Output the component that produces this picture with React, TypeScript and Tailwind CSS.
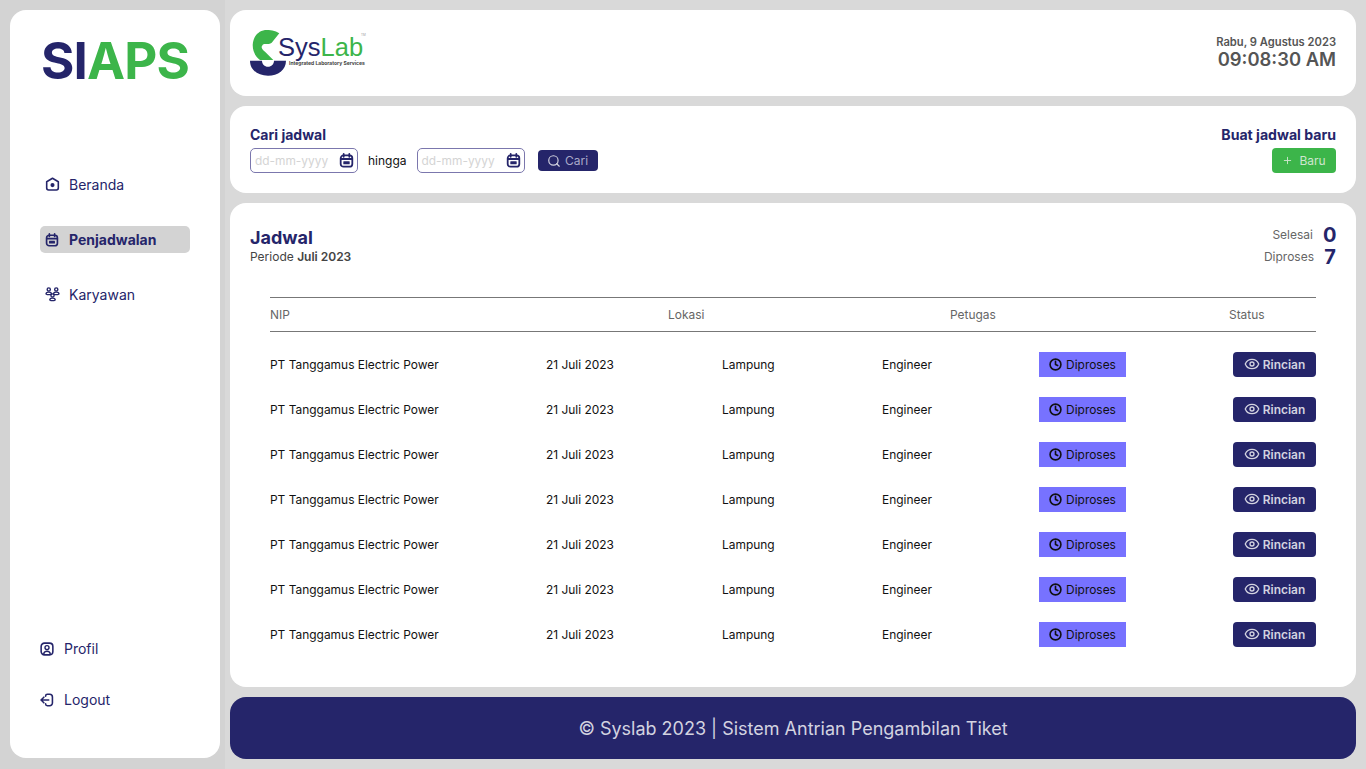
import React from 'react';
import { Clock, Eye, Plus, Search } from 'lucide-react';

const rows = Array.from({ length: 7 }, (_, i) => i);

const CalendarIcon: React.FC<{ className?: string }> = ({ className }) => (
    <svg viewBox="0 0 16 16" fill="none" className={className}>
        <rect x="1.8" y="2.6" width="12.4" height="12" rx="3" stroke="currentColor" strokeWidth="1.9" />
        <path d="M5 1v3M11 1v3M2 6.4h12" stroke="currentColor" strokeWidth="1.9" strokeLinecap="round" />
        <rect x="4.6" y="8.8" width="6.8" height="3.2" rx="0.6" fill="currentColor" />
    </svg>
);

const HomeIcon: React.FC<{ className?: string }> = ({ className }) => (
    <svg viewBox="0 0 16 16" fill="none" className={className}>
        <path d="M8 1.4 14.2 5v6.8a2 2 0 0 1-2 2H3.8a2 2 0 0 1-2-2V5z" stroke="currentColor" strokeWidth="1.7" strokeLinejoin="round" />
        <circle cx="8" cy="8.6" r="2.2" fill="currentColor" />
    </svg>
);

const TeamIcon: React.FC<{ className?: string }> = ({ className }) => (
    <svg viewBox="0 0 16 16" fill="none" className={className}>
        <circle cx="4" cy="2.6" r="1.7" stroke="currentColor" strokeWidth="1.5" />
        <circle cx="12" cy="2.6" r="1.7" stroke="currentColor" strokeWidth="1.5" />
        <circle cx="8" cy="9" r="1.7" stroke="currentColor" strokeWidth="1.5" />
        <path d="M1 7.4c.2-1.3 1.4-2 3-2s2.800.7 3 2c-1 .6-2 .8-3 .8s-2-.2-3-.8ZM9 7.4c.2-1.300 1.400-2 3-2s2.800.7 3 2c-1 .6-2 .8-3 .8s-2-.2-3-.8ZM5 13.800c.2-1.300 1.400-2 3-2s2.800.7 3 2c-1 .6-2 .8-3 .8s-2-.2-3-.8Z" stroke="currentColor" strokeWidth="1.3" strokeLinejoin="round" />
    </svg>
);

const ProfileIcon: React.FC<{ className?: string }> = ({ className }) => (
    <svg viewBox="0 0 16 16" fill="none" className={className}>
        <rect x="1.3" y="1.3" width="13.4" height="13.4" rx="3.8" stroke="currentColor" strokeWidth="1.8" />
        <circle cx="8" cy="6.4" r="2.3" stroke="currentColor" strokeWidth="1.6" />
        <path d="M4.2 14c.2-2.200 1.700-3.400 3.800-3.400s3.600 1.200 3.800 3.400" stroke="currentColor" strokeWidth="1.6" />
    </svg>
);

const LogoutIcon: React.FC<{ className?: string }> = ({ className }) => (
    <svg viewBox="0 0 16 16" fill="none" className={className}>
        <path d="M6.4 3.6V3.400a2 2 0 0 1 2-1.900h2.700a3.100 3.100 0 0 1 3.100 3.100v6.800a3.100 3.100 0 0 1-3.100 3.100H8.400a2 2 0 0 1-2-1.900v-.2" stroke="currentColor" strokeWidth="1.8" strokeLinecap="round" />
        <path d="M10 8H1.400M4.400 4.800 1.200 8l3.200 3.200" stroke="currentColor" strokeWidth="1.8" strokeLinecap="round" strokeLinejoin="round" />
    </svg>
);

const SyslabLogo: React.FC = () => (
    <div className="relative w-[116px] h-[46px]">
        <svg viewBox="0 0 36 46" className="absolute left-0 top-0 w-[36px] h-[46px]">
            <path d="M29.300 3.300C25 .5 20 0 15 0 8 1 3 7 2.700 15 2.700 22 6 27 10 30L23.300 30 15 21.700C12 20 11 17 12 16 13 14 14 14 15 14 18 14 20 14 21.700 12.700Z" fill="#3cb54a" />
            <path d="M0 30.700H36C36 40 28 45.700 18 45.700S0 40 0 30.700ZM12 30.700c0 3.400 2.600 6 6 6s6-2.600 6-6Z" fill="#25256a" fillRule="evenodd" />
        </svg>
        <span className="absolute left-[28px] top-[7px] text-[25.5px] leading-[21px] font-['Liberation_Sans',sans-serif] text-[#25256a]">Sys<span className="text-[#3cb54a]">Lab</span></span>
        <span className="absolute left-[39px] top-[30px] text-[5px] leading-[6px] font-bold text-[#444] whitespace-nowrap">Integrated Laboratory Services</span>
        <span className="absolute left-[111px] top-[3px] text-[3px] leading-[4px] text-[#999]">TM</span>
    </div>
);

const DateField: React.FC = () => (
    <div className="flex items-center justify-between w-[108px] h-[25px] rounded-[5px] border border-[#7b77ad] pl-[4px] pr-[3px]">
        <span className="text-[11.9px] text-[#d4d4d4]">dd-mm-yyyy</span>
        <CalendarIcon className="w-[15px] h-[15px] text-[#25256a]" />
    </div>
);

const App: React.FC = () => {
    return (
        <div className="flex w-[1366px] h-[769px] overflow-hidden bg-[#d9d9d9] font-['Inter',sans-serif] antialiased">
            <div className="w-[225px] h-full shrink-0 bg-[#d3d3d3] pl-[10px] pr-[5px] pt-[10px] pb-[11px]">
                <aside className="flex flex-col justify-between h-full rounded-[16px] bg-white pl-[30px] pr-[30px]">
                    <div>
                        <div className="mt-[18px] text-center text-[51px] leading-[66px] font-bold tracking-[-0.8px] text-[#25256a]">
                            SI<span className="text-[#3cb54a]">APS</span>
                        </div>
                        <nav className="mt-[77px] flex flex-col gap-[28px] text-[14px] text-[#25256a]">
                            <a className="flex items-center gap-[9px] h-[27px] pl-[5px]">
                                <HomeIcon className="w-[15px] h-[15px]" />
                                Beranda
                            </a>
                            <a className="flex items-center gap-[10px] h-[27px] pl-[5px] rounded-[5px] bg-[#d3d3d3] font-bold">
                                <CalendarIcon className="w-[14px] h-[14px]" />
                                Penjadwalan
                            </a>
                            <a className="flex items-center gap-[9px] h-[27px] pl-[5px]">
                                <TeamIcon className="w-[15px] h-[15px]" />
                                Karyawan
                            </a>
                        </nav>
                    </div>
                    <div className="mb-[45px] flex flex-col gap-[24px] text-[14px] text-[#25256a]">
                        <a className="flex items-center gap-[10px] h-[27px]">
                            <ProfileIcon className="w-[14px] h-[14px]" />
                            Profil
                        </a>
                        <a className="flex items-center gap-[10px] h-[27px]">
                            <LogoutIcon className="w-[14px] h-[14px]" />
                            Logout
                        </a>
                    </div>
                </aside>
            </div>

            <main className="flex flex-col flex-1 gap-[10px] pt-[10px] pl-[5px] pr-[10px] pb-[10px]">
                <header className="flex items-center justify-between h-[86px] shrink-0 rounded-[16px] bg-white px-[20px]">
                    <SyslabLogo />
                    <div className="text-right text-[#555555]">
                        <div className="text-[11.2px] leading-[13px] font-semibold">Rabu, 9 Agustus 2023</div>
                        <div className="text-[18.4px] leading-[21px] font-semibold">09:08:30 AM</div>
                    </div>
                </header>

                <section className="flex items-start justify-between h-[87px] shrink-0 rounded-[16px] bg-white px-[20px] pt-[20px]">
                    <div>
                        <h2 className="text-[14px] leading-[17px] font-bold text-[#25256a]">Cari jadwal</h2>
                        <div className="mt-[5px] flex items-center text-[12px]">
                            <DateField />
                            <span className="mx-[10px] text-[#111]">hingga</span>
                            <DateField />
                            <button className="ml-[13px] flex items-center justify-center gap-[4px] w-[60px] h-[21px] rounded-[4px] bg-[#25256a] text-[#a9a9c9]">
                                <Search className="w-[14px] h-[14px] text-[#d3d3e0]" strokeWidth={2} />
                                Cari
                            </button>
                        </div>
                    </div>
                    <div className="flex flex-col items-end">
                        <h2 className="text-[14.1px] leading-[17px] font-bold text-[#25256a]">Buat jadwal baru</h2>
                        <button className="mt-[5px] flex items-center justify-center gap-[6px] w-[64px] h-[25px] rounded-[4px] bg-[#3cb54a] text-[12px] text-[#cfe5cf]">
                            <Plus className="w-[11px] h-[11px]" strokeWidth={2} />
                            Baru
                        </button>
                    </div>
                </section>

                <section className="flex-1 rounded-[16px] bg-white px-[20px] pt-[25px]">
                    <div className="flex items-start justify-between">
                        <div>
                            <h1 className="text-[18px] leading-[20px] font-bold text-[#25256a]">Jadwal</h1>
                            <p className="mt-[1px] text-[12px] leading-[15px] text-[#444]">Periode <span className="font-semibold">Juli 2023</span></p>
                        </div>
                        <div className="-mt-[4px] flex flex-col text-[12px] text-[#666]">
                            <div className="flex items-center justify-end gap-[10px] h-[22px]">
                                Selesai
                                <span className="w-[13px] text-right text-[20px] font-bold text-[#25256a]">0</span>
                            </div>
                            <div className="flex items-center justify-end gap-[10px] h-[22px]">
                                Diproses
                                <span className="w-[12px] text-right text-[20px] font-bold text-[#25256a]">7</span>
                            </div>
                        </div>
                    </div>

                    <div className="mx-[20px] mt-[29px]">
                        <div className="relative h-[35px] border-y border-[#777] text-[11.95px] leading-[33px] text-[#666]">
                            <span className="absolute left-0">NIP</span>
                            <span className="absolute left-[398px]">Lokasi</span>
                            <span className="absolute left-[680px]">Petugas</span>
                            <span className="absolute left-[959px]">Status</span>
                        </div>
                        <div className="mt-[20px] flex flex-col gap-[20px] text-[11.95px] text-[#111]">
                            {rows.map(row => (
                                <div key={row} className="flex items-center h-[25px]">
                                    <span className="w-[276px]">PT Tanggamus Electric Power</span>
                                    <span className="w-[176px]">21 Juli 2023</span>
                                    <span className="w-[160px]">Lampung</span>
                                    <span className="w-[157px]">Engineer</span>
                                    <span className="flex items-center justify-center gap-[4px] w-[87px] h-[25px] bg-[#7772ff]">
                                        <Clock className="w-[13px] h-[13px]" strokeWidth={3} />
                                        Diproses
                                    </span>
                                    <button className="ml-auto flex items-center justify-center gap-[3px] w-[83px] h-[25px] rounded-[4px] bg-[#25256a] font-semibold text-[#d3d3e0]">
                                        <Eye className="w-[16px] h-[16px] -mt-[1px]" strokeWidth={2} />
                                        Rincian
                                    </button>
                                </div>
                            ))}
                        </div>
                    </div>
                </section>

                <footer className="flex items-center justify-center h-[62px] shrink-0 rounded-[16px] bg-[#25256a] text-[18px] text-[#d3d3e0]">
                    © Syslab 2023 | Sistem Antrian Pengambilan Tiket
                </footer>
            </main>
        </div>
    );
};

export default App;
